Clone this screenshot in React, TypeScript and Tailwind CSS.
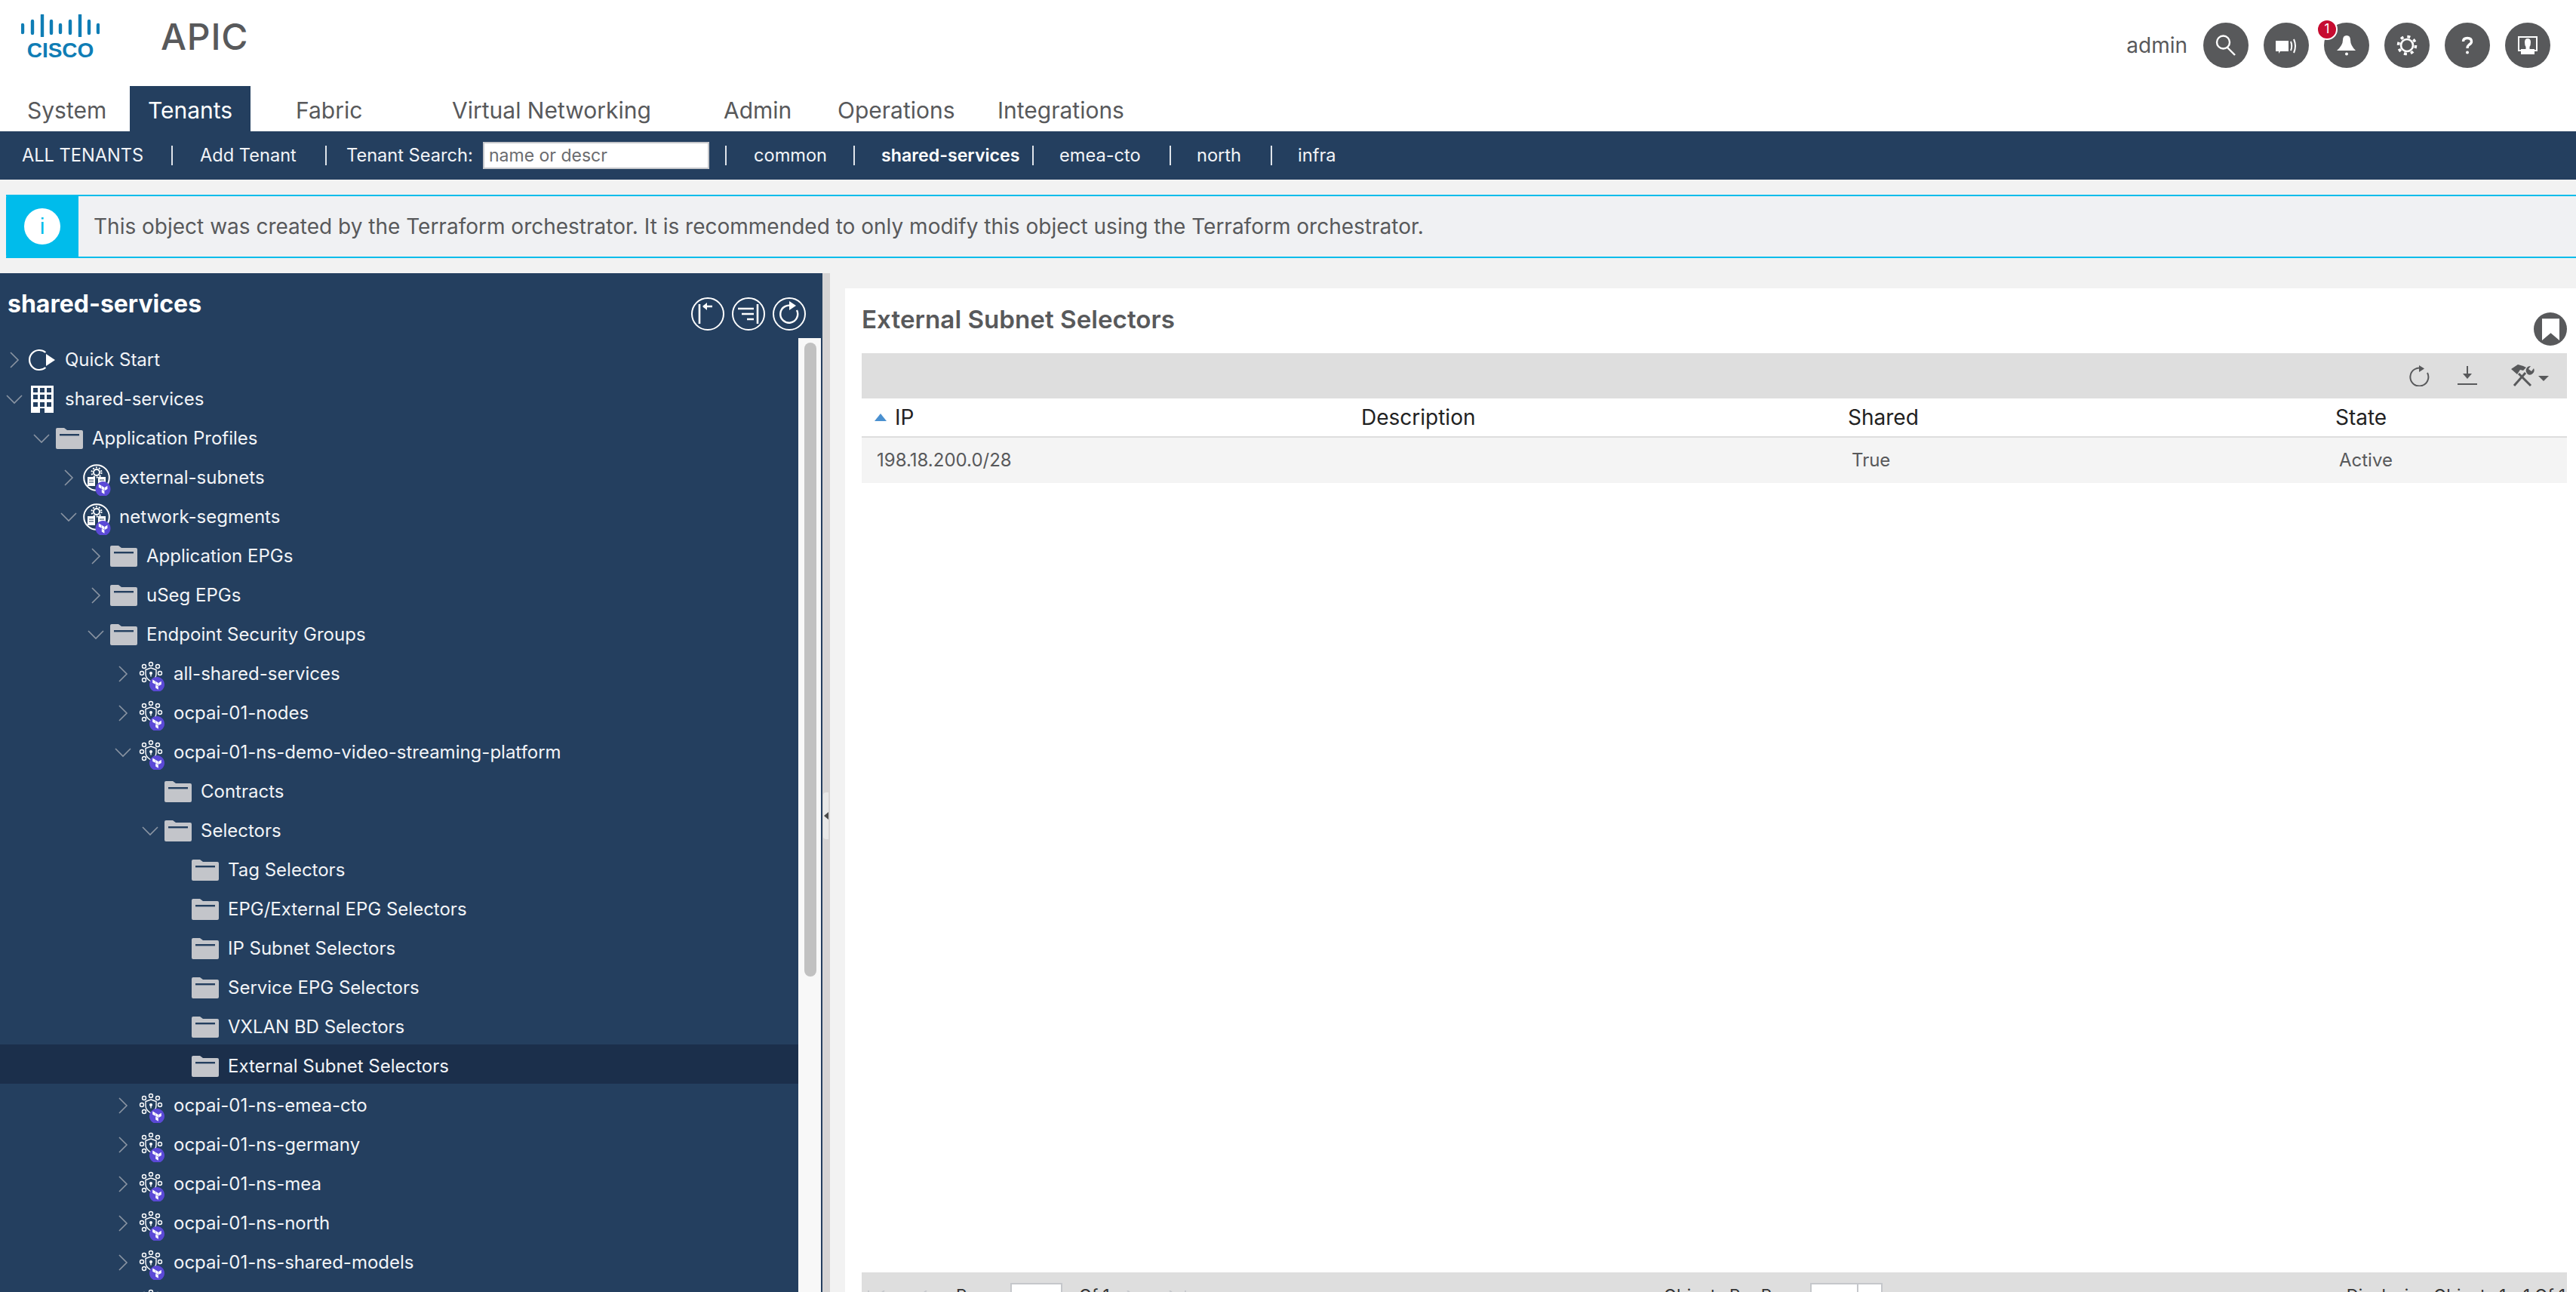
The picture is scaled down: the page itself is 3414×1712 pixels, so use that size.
import { ReactNode } from "react";

type Kind = "quick" | "tenant" | "folder" | "app" | "esg";

type TreeRow = {
  depth: number;
  label: string;
  kind: Kind;
  open?: boolean;
  leaf?: boolean;
  selected?: boolean;
};

const INDENT = [
  "pl-[8px]",
  "pl-[44px]",
  "pl-[80px]",
  "pl-[116px]",
  "pl-[152px]",
  "pl-[188px]",
  "pl-[224px]",
];

const TREE: TreeRow[] = [
  { depth: 0, label: "Quick Start", kind: "quick" },
  { depth: 0, label: "shared-services", kind: "tenant", open: true },
  { depth: 1, label: "Application Profiles", kind: "folder", open: true },
  { depth: 2, label: "external-subnets", kind: "app" },
  { depth: 2, label: "network-segments", kind: "app", open: true },
  { depth: 3, label: "Application EPGs", kind: "folder" },
  { depth: 3, label: "uSeg EPGs", kind: "folder" },
  { depth: 3, label: "Endpoint Security Groups", kind: "folder", open: true },
  { depth: 4, label: "all-shared-services", kind: "esg" },
  { depth: 4, label: "ocpai-01-nodes", kind: "esg" },
  { depth: 4, label: "ocpai-01-ns-demo-video-streaming-platform", kind: "esg", open: true },
  { depth: 5, label: "Contracts", kind: "folder", leaf: true },
  { depth: 5, label: "Selectors", kind: "folder", open: true },
  { depth: 6, label: "Tag Selectors", kind: "folder", leaf: true },
  { depth: 6, label: "EPG/External EPG Selectors", kind: "folder", leaf: true },
  { depth: 6, label: "IP Subnet Selectors", kind: "folder", leaf: true },
  { depth: 6, label: "Service EPG Selectors", kind: "folder", leaf: true },
  { depth: 6, label: "VXLAN BD Selectors", kind: "folder", leaf: true },
  { depth: 6, label: "External Subnet Selectors", kind: "folder", leaf: true, selected: true },
  { depth: 4, label: "ocpai-01-ns-emea-cto", kind: "esg" },
  { depth: 4, label: "ocpai-01-ns-germany", kind: "esg" },
  { depth: 4, label: "ocpai-01-ns-mea", kind: "esg" },
  { depth: 4, label: "ocpai-01-ns-north", kind: "esg" },
  { depth: 4, label: "ocpai-01-ns-shared-models", kind: "esg" },
  { depth: 4, label: "", kind: "esg" },
];

const TABS = [
  { label: "System", cls: "w-[172px] pl-[36px]" },
  { label: "Tenants", cls: "w-[160px] pl-[24px] bg-[#243f5f] text-white" },
  { label: "Fabric", cls: "w-[267px] pl-[60px]" },
  { label: "Virtual Networking", cls: "w-[360px]" },
  { label: "Admin", cls: "w-[151px]" },
  { label: "Operations", cls: "w-[212px]" },
  { label: "Integrations", cls: "" },
];

const LOGO_BARS = [
  [2, 14, 24],
  [15, 9, 25],
  [28, 1, 29],
  [40, 9, 25],
  [52, 14, 24],
  [65, 9, 25],
  [78, 1, 29],
  [90, 9, 25],
  [102, 14, 24],
];

const TF_GLYPH =
  "M1.44 0v7.575l6.561 3.79V3.787zm21.12 4.227l-6.561 3.791v7.574l6.56-3.787zM8.72 4.23v7.575l6.561 3.787V8.018zm0 8.405v7.575l6.561 3.787v-7.575z";

function Sep({ className = "" }: { className?: string }) {
  return <span className={`h-[26px] w-[2px] shrink-0 bg-[#dfe4ea] ${className}`} />;
}

function TreeIcon({ kind }: { kind: Kind }) {
  if (kind === "quick") {
    return (
      <svg viewBox="0 0 36 36" className="h-[36px] w-[36px]">
        <path d="M22.4 8 A13 13 0 1 0 22.4 28" fill="none" stroke="#fff" strokeWidth="2.2" />
        <path d="M23 10 L35 18 L23 26 Z" fill="#fff" />
      </svg>
    );
  }
  if (kind === "tenant") {
    return (
      <svg viewBox="0 0 36 36" className="h-[36px] w-[36px]">
        <path d="M3 0 H33 V36 H21 V30 H15 V36 H3 Z" fill="#fff" />
        {[3, 12, 22].map((y) =>
          [6, 15, 24].map((x) => <rect key={`${x}-${y}`} x={x} y={y} width="6" height="6" fill="#243f5f" />)
        )}
      </svg>
    );
  }
  if (kind === "folder") {
    return (
      <svg viewBox="0 0 36 28" className="h-[28px] w-[36px]">
        <path d="M0 2 Q0 0 2 0 H11 L15 3 H34 Q36 3 36 5 V26 Q36 28 34 28 H2 Q0 28 0 26 Z" fill="#c3c5ca" />
        <rect x="5" y="8" width="26" height="2.4" fill="#243f5f" />
      </svg>
    );
  }
  if (kind === "app") {
    return (
      <svg viewBox="0 0 36 36" className="h-[36px] w-[36px] overflow-visible">
        <circle cx="18" cy="18" r="16.8" fill="none" stroke="#fff" strokeWidth="2" />
        <circle cx="18" cy="11" r="4" fill="none" stroke="#fff" strokeWidth="2" />
        <circle cx="18" cy="11" r="6.5" fill="none" stroke="#fff" strokeWidth="2" strokeDasharray="2 2.1" />
        <rect x="6" y="17" width="10" height="12" fill="#fff" />
        <rect x="20" y="17" width="10" height="12" fill="#fff" />
        <path d="M8 21 H14 M8 24 H14 M22 21 H28" stroke="#243f5f" strokeWidth="1.2" />
        <path fill="#5b49d6" d="M22.1 42 A10 10 0 1 1 30.9 42 Z" />
        <path transform="translate(20 26.5) scale(0.55)" fill="#fff" d={TF_GLYPH} />
      </svg>
    );
  }
  return (
    <svg viewBox="0 0 36 36" className="h-[36px] w-[36px] overflow-visible">
      {[
        [9, 8],
        [18, 5],
        [27, 8],
        [6, 17],
        [30, 17],
        [9, 26],
      ].map(([cx, cy]) => (
        <circle key={`${cx}-${cy}`} cx={cx} cy={cy} r="2.5" fill="none" stroke="#fff" strokeWidth="1.4" />
      ))}
      <path d="M18 10 L25 12.5 V18 Q25 24 18 28 Q11 24 11 18 V12.5 Z" fill="none" stroke="#fff" strokeWidth="1.4" />
      <circle cx="18" cy="17" r="2" fill="#fff" />
      <path d="M18 17 V21.5" stroke="#fff" strokeWidth="1.4" />
      <path fill="#5b49d6" d="M21.6 41 A10 10 0 1 1 30.4 41 Z" />
      <path transform="translate(19.4 25.5) scale(0.55)" fill="#fff" d={TF_GLYPH} />
    </svg>
  );
}

function Chevron({ open }: { open?: boolean }) {
  return (
    <svg viewBox="0 0 22 22" className="h-[22px] w-[22px]">
      {open ? (
        <path d="M1 6 L11 16 L21 6" fill="none" stroke="#8b95a3" strokeWidth="1.6" />
      ) : (
        <path d="M6 1 L16 11 L6 21" fill="none" stroke="#8b95a3" strokeWidth="1.6" />
      )}
    </svg>
  );
}

function Row({ row }: { row: TreeRow }) {
  return (
    <div
      className={`flex h-[52px] shrink-0 items-center pt-[5px] ${INDENT[row.depth]} ${
        row.selected ? "bg-[#1b2f4b]" : ""
      }`}
    >
      <span className="flex w-[22px] shrink-0 justify-center">{!row.leaf && <Chevron open={row.open} />}</span>
      <span className="ml-[8px] flex h-[36px] w-[36px] shrink-0 items-center justify-center">
        <TreeIcon kind={row.kind} />
      </span>
      <span className="ml-[12px] whitespace-nowrap text-[24px] text-[#f2f4f7]">{row.label}</span>
    </div>
  );
}

function RoundIcon({ children }: { children: ReactNode }) {
  return (
    <svg viewBox="0 0 44 44" className="h-[44px] w-[44px]">
      <circle cx="22" cy="22" r="21" fill="none" stroke="#fff" strokeWidth="2" />
      {children}
    </svg>
  );
}

function HeaderButton({ children, badge }: { children: ReactNode; badge?: string }) {
  return (
    <span className="relative flex h-[60px] w-[60px] items-center justify-center rounded-full bg-[#58595b]">
      {badge && (
        <span className="absolute -left-[10px] -top-[5px] flex h-[28px] w-[28px] items-center justify-center rounded-full border-2 border-white bg-[#c60c30] text-[17px] text-white">
          {badge}
        </span>
      )}
      <svg viewBox="0 0 36 36" className="h-[36px] w-[36px]">
        {children}
      </svg>
    </span>
  );
}

function PagerArrow({ dir, bar }: { dir: "left" | "right"; bar?: boolean }) {
  return (
    <svg viewBox="0 0 26 24" className="h-[24px] w-[26px]">
      {dir === "left" ? (
        <path d="M22 0 L8 12 L22 24" fill="none" stroke="#c5c7cb" strokeWidth="2" />
      ) : (
        <path d="M4 0 L18 12 L4 24" fill="none" stroke="#c5c7cb" strokeWidth="2" />
      )}
      {bar && <path d={dir === "left" ? "M1 0 V24" : "M25 0 V24"} stroke="#c5c7cb" strokeWidth="2" />}
    </svg>
  );
}

export default function App() {
  return (
    <div className="flex h-[1712px] w-[3414px] flex-col overflow-hidden bg-[#f2f2f2] font-['Inter',sans-serif] text-[#58595b]">
      {/* top header */}
      <header className="h-[114px] shrink-0 bg-white">
        <div className="flex items-start">
          <div className="ml-[28px] mt-[19px] flex w-[104px] flex-col items-center text-[#0f7db5]">
            <svg viewBox="0 0 104 30" className="h-[30px] w-[104px]">
              {LOGO_BARS.map(([x, y1, y2]) => (
                <line
                  key={x}
                  x1={x}
                  x2={x}
                  y1={y1}
                  y2={y2}
                  stroke="#0f7db5"
                  strokeWidth="4.4"
                  strokeLinecap="round"
                />
              ))}
            </svg>
            <span className="mt-[6px] font-['Liberation_Sans',sans-serif] text-[28px] font-bold leading-[24px]">
              CISCO
            </span>
          </div>
          <span className="ml-[81px] mt-[20px] text-[48px] font-medium leading-[58px] tracking-[0.8px]">APIC</span>
          <div className="ml-auto mr-[34px] mt-[30px] flex items-center">
            <span className="mr-[21px] text-[28px]">admin</span>
            <div className="flex gap-[20px]">
              <HeaderButton>
                <circle cx="14.5" cy="14" r="8.5" fill="none" stroke="#fff" strokeWidth="2.4" />
                <path d="M19.5 20.5 L30 31" stroke="#fff" strokeWidth="2.4" />
              </HeaderButton>
              <HeaderButton>
                <path d="M4 12 H21 V26 H10 L8 29 V26 H4 Z" fill="#fff" />
                <path d="M24 13 Q26.5 19 24 25 M28 10 Q32 19 28 28" fill="none" stroke="#fff" strokeWidth="2" />
              </HeaderButton>
              <HeaderButton badge="1">
                <path d="M18 5 Q23 5 23 11 Q23 18 30 25 H5 Q13 18 13 11 Q13 5 18 5 Z" fill="#fff" />
                <circle cx="18" cy="29.5" r="2" fill="#fff" />
              </HeaderButton>
              <HeaderButton>
                <circle cx="18" cy="18" r="8" fill="none" stroke="#fff" strokeWidth="2.6" />
                <circle cx="18" cy="18" r="11.5" fill="none" stroke="#fff" strokeWidth="3.6" strokeDasharray="4 5.03" />
              </HeaderButton>
              <HeaderButton>
                <path
                  d="M12.5 13 Q12.5 8.5 18 8.5 Q23.5 8.5 23.5 13 Q23.5 15.5 20 17.5 Q18 19 18 22"
                  fill="none"
                  stroke="#fff"
                  strokeWidth="3.4"
                />
                <circle cx="18" cy="27.5" r="2" fill="#fff" />
              </HeaderButton>
              <HeaderButton>
                <path d="M6 7 H30 V25 H6 Z" fill="none" stroke="#fff" strokeWidth="2" />
                <path d="M18 9 Q22 9 22 14 Q22 18 20.5 20 V23 H27 V30 H9 V23 H15.5 V20 Q14 18 14 14 Q14 9 18 9 Z" fill="#fff" />
              </HeaderButton>
            </div>
          </div>
        </div>
      </header>

      {/* main tabs */}
      <div className="flex h-[60px] shrink-0 items-stretch bg-white text-[30px]">
        {TABS.map((t) => (
          <span key={t.label} className={`flex items-center whitespace-nowrap pt-[4px] ${t.cls}`}>
            {t.label}
          </span>
        ))}
      </div>

      {/* tenant bar */}
      <div className="flex h-[64px] shrink-0 items-center bg-[#243f5f] pl-[29px] text-[23.6px] text-[#f2f4f7]">
        <span className="w-[198px] whitespace-nowrap">ALL TENANTS</span>
        <Sep />
        <span className="ml-[36px] w-[166px] whitespace-nowrap">Add Tenant</span>
        <Sep />
        <span className="ml-[26px] w-[181px] whitespace-nowrap">Tenant Search:</span>
        <input
          readOnly
          placeholder="name or descr"
          className="h-[36px] w-[300px] border-2 border-[#c5c7cb] bg-white px-[6px] text-[23px] text-[#58595b] placeholder:text-[#6b6c6f]"
        />
        <Sep className="ml-[21px]" />
        <span className="ml-[36px] w-[132px] whitespace-nowrap">common</span>
        <Sep />
        <span className="ml-[35px] w-[200px] whitespace-nowrap text-[23.2px] font-semibold text-white">
          shared-services
        </span>
        <Sep />
        <span className="ml-[34px] w-[146px] whitespace-nowrap">emea-cto</span>
        <Sep />
        <span className="ml-[34px] w-[98px] whitespace-nowrap">north</span>
        <Sep />
        <span className="ml-[34px] whitespace-nowrap">infra</span>
      </div>

      {/* terraform notice */}
      <div className="ml-[8px] mt-[20px] flex h-[84px] shrink-0 border-y-2 border-[#00bceb] bg-[#f0f1f3]">
        <div className="-my-[2px] flex w-[96px] items-center justify-center rounded-l-[4px] bg-[#00bceb]">
          <span className="flex h-[48px] w-[48px] items-center justify-center rounded-full bg-white font-['Liberation_Sans',sans-serif] text-[30px] leading-none text-[#00bceb]">
            i
          </span>
        </div>
        <span className="ml-[20px] flex items-center text-[28px]">
          This object was created by the Terraform orchestrator. It is recommended to only modify this object using the
          Terraform orchestrator.
        </span>
      </div>

      <div className="mt-[20px] flex min-h-0 flex-1">
        {/* left tree panel */}
        <aside className="flex w-[1090px] shrink-0 flex-col overflow-hidden bg-[#243f5f]">
          <div className="flex h-[86px] shrink-0 items-start justify-between pr-[22px]">
            <h2 className="ml-[10px] mt-[20px] text-[32px] font-bold leading-[42px] text-white">shared-services</h2>
            <div className="mt-[32px] flex gap-[10px]">
              <RoundIcon>
                <path d="M11 9 V35 M28 12 H16" fill="none" stroke="#fff" strokeWidth="2.6" />
                <path d="M21 7 L15 12 L21 17 Z" fill="#fff" />
              </RoundIcon>
              <RoundIcon>
                <path d="M8 15 H29 M13 22 H29 M20 29 H29" fill="none" stroke="#fff" strokeWidth="2.4" />
                <path d="M34 9 V35" fill="none" stroke="#fff" strokeWidth="2.6" />
              </RoundIcon>
              <RoundIcon>
                <path d="M26 11.5 A11.5 11.5 0 1 0 32 17" fill="none" stroke="#fff" strokeWidth="2.4" />
                <path d="M22 5 L31 11 L22 17 Z" fill="#fff" />
              </RoundIcon>
            </div>
          </div>
          <div className="flex min-h-0 flex-1">
            <div className="flex w-[1058px] shrink-0 flex-col overflow-hidden">
              {TREE.map((row, i) => (
                <Row key={i} row={row} />
              ))}
            </div>
            <div className="w-[30px] shrink-0 bg-[#f8f8f8] pl-[8px] pr-[6px] pt-[6px]">
              <div className="h-[840px] rounded-full bg-[#c1c1c1]" />
            </div>
          </div>
        </aside>

        {/* splitter */}
        <div className="relative w-[10px] shrink-0 bg-[#d6d4d4]">
          <span className="absolute left-[1px] top-[688px] h-[62px] w-[7px] rounded-l-[4px] bg-[#e8e8e8]" />
          <span className="absolute left-[2px] top-[714px] h-0 w-0 border-y-[5px] border-r-[6px] border-y-transparent border-r-[#4a4a4a]" />
        </div>

        {/* content panel */}
        <main className="ml-[20px] mt-[20px] flex min-w-0 flex-1 flex-col bg-white pl-[22px] pr-[12px]">
          <div className="relative h-[86px] shrink-0">
            <h1 className="pt-[20px] text-[33.2px] font-semibold leading-[42px]">External Subnet Selectors</h1>
            <span className="absolute right-0 top-[32px] flex h-[44px] w-[44px] items-center justify-center rounded-full bg-[#58595b]">
              <svg viewBox="0 0 24 30" className="h-[29px] w-[23px]">
                <path d="M0 0 H24 V30 L12 20 L0 30 Z" fill="#fff" />
              </svg>
            </span>
          </div>

          <div className="flex h-[60px] shrink-0 items-center justify-end bg-[#dedede] pr-[23px]">
            <svg viewBox="0 0 28 28" className="h-[28px] w-[28px]">
              <path d="M19 4.5 A12 12 0 1 0 25 10" fill="none" stroke="#58595b" strokeWidth="2" />
              <path d="M14 0 L21 4.5 L14 9 Z" fill="#58595b" />
            </svg>
            <svg viewBox="0 0 28 28" className="ml-[36px] h-[28px] w-[28px]">
              <path d="M14 1 V14" stroke="#58595b" strokeWidth="2" />
              <path d="M8 11 H20 L14 18 Z" fill="#58595b" />
              <path d="M1 25 H27" stroke="#58595b" strokeWidth="2" />
            </svg>
            <svg viewBox="0 0 52 30" className="ml-[43px] h-[30px] w-[52px]">
              <path d="M5 28 L20 11" stroke="#58595b" strokeWidth="3" />
              <path d="M1 6 L10 0 L17 2 L21 4 L17 8 L13 7 L9 13 Z" fill="#58595b" />
              <path d="M27 28 L11 12" stroke="#58595b" strokeWidth="3" fill="none" />
              <path d="M21 10 A6 6 0 0 1 27 2 L24 6 L28 9 L31 5 A6 6 0 0 1 23 13 Z" fill="#58595b" />
              <path d="M37 15 H51 L44 22 Z" fill="#58595b" />
            </svg>
          </div>

          <div className="grid h-[52px] shrink-0 grid-cols-[648px_646px_646px_1fr] items-center border-b-2 border-[#dedede] text-[28px] text-[#222]">
            <span className="flex items-center pl-[17px]">
              <svg viewBox="0 0 16 10" className="h-[10px] w-[16px]">
                <path d="M8 0 L16 10 H0 Z" fill="#4a90d0" />
              </svg>
              <span className="ml-[11px]">IP</span>
            </span>
            <span className="pl-[14px]">Description</span>
            <span className="pl-[13px]">Shared</span>
            <span className="pl-[13px]">State</span>
          </div>
          <div className="grid h-[60px] shrink-0 grid-cols-[648px_646px_646px_1fr] items-center bg-[#f4f4f4] text-[24px]">
            <span className="pl-[20px]">198.18.200.0/28</span>
            <span />
            <span className="pl-[18px]">True</span>
            <span className="pl-[18px]">Active</span>
          </div>

          <div className="flex-1" />

          <div className="flex h-[26px] shrink-0 overflow-hidden bg-[#dedede] pt-[14px] text-[22.3px] text-[#333]">
            <span className="ml-[8px] mt-[10px] flex w-[117px] shrink-0 gap-[30px]">
              <PagerArrow dir="left" bar />
              <PagerArrow dir="left" />
            </span>
            <span className="w-[72px] shrink-0">Page</span>
            <span className="h-[60px] w-[69px] shrink-0 border-2 border-[#c5c7cb] bg-white" />
            <span className="ml-[22px] w-[60px] shrink-0">Of 1</span>
            <span className="mt-[10px] flex w-[715px] shrink-0 gap-[30px]">
              <PagerArrow dir="right" />
              <PagerArrow dir="right" bar />
            </span>
            <span className="w-[194px] shrink-0 whitespace-nowrap">Objects Per Page:</span>
            <span className="flex h-[60px] w-[96px] shrink-0 border-2 border-[#c5c7cb] bg-white">
              <span className="w-[62px] border-r-2 border-[#c5c7cb]" />
            </span>
            <span className="ml-auto whitespace-nowrap pr-[2px]">Displaying Objects 1 - 1 Of 1</span>
          </div>
        </main>
      </div>
    </div>
  );
}
